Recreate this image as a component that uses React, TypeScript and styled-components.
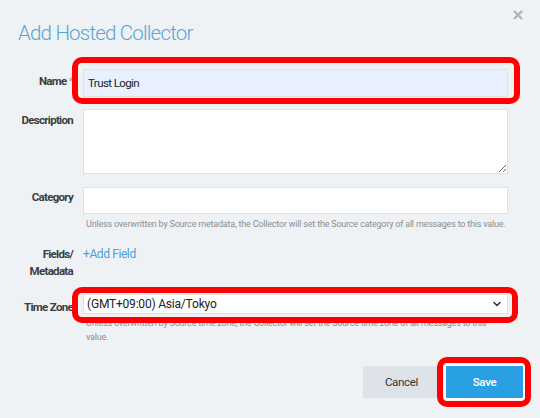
import styled, { createGlobalStyle } from "styled-components";
import { ChevronDown } from "lucide-react";

const GlobalStyle = createGlobalStyle`
  html, body {
    margin: 0;
    padding: 0;
    background: #eff2f4;
  }
  body {
    font-family: Roboto, "Liberation Sans", Arial, sans-serif;
  }
`;

type Inset = { t: number; r: number; b: number; l: number };

const App = () => {
  return (
    <Page>
      <GlobalStyle />
      <Header>
        <Title>Add Hosted Collector</Title>
        <CloseButton aria-label="close">
          <svg width="10" height="10" viewBox="0 0 10 10">
            <path d="M1 1 L9 9 M9 1 L1 9" stroke="#afb3b7" strokeWidth="2.2" />
          </svg>
        </CloseButton>
      </Header>

      <Row $top={23}>
        <Label $pad={5}>
          Name <Star>*</Star>
        </Label>
        <Marked $inset={{ t: 12, r: 12, b: 7, l: 11 }}>
          <TextInput defaultValue="Trust Login" $height={28} $autofill />
        </Marked>
      </Row>

      <Row $top={12}>
        <Label $pad={4}>Description</Label>
        <TextArea />
      </Row>

      <Row $top={13}>
        <Label $pad={3}>Category</Label>
        <Field>
          <TextInput $height={27} />
          <Help>
            Unless overwritten by Source metadata, the Collector will set the
            Source category of all messages to this value.
          </Help>
        </Field>
      </Row>

      <Row $top={16}>
        <Label $pad={0} $lh={17}>
          Fields/
          <br />
          Metadata
        </Label>
        <AddLink>+Add Field</AddLink>
      </Row>

      <Row $top={14}>
        <Label $pad={6}>Time Zone</Label>
        <Field>
          <Marked $inset={{ t: 7, r: 10, b: 9, l: 11 }}>
            <SelectBox>
              <Select defaultValue="tokyo">
                <option value="tokyo">(GMT+09:00) Asia/Tokyo</option>
              </Select>
              <Chevron>
                <ChevronDown size={12} strokeWidth={3} color="#333" />
              </Chevron>
            </SelectBox>
          </Marked>
          <Help $lh={14} $top={2} $width={405}>
            Unless overwritten by Source time zone, the Collector will set the
            Source time zone of all messages to this value.
          </Help>
        </Field>
      </Row>

      <Footer>
        <Button>Cancel</Button>
        <Marked $inset={{ t: 9, r: 8, b: 9, l: 9 }}>
          <Button $primary>Save</Button>
        </Marked>
      </Footer>
    </Page>
  );
};

export default App;

const Page = styled.div`
  width: 540px;
  height: 418px;
  box-sizing: border-box;
  overflow: hidden;
  padding-right: 17px;
  background: #eff2f4;
`;

const Header = styled.div`
  display: flex;
  justify-content: space-between;
  align-items: flex-start;
`;

const Title = styled.h1`
  margin: 0;
  padding: 20px 0 0 18px;
  font-size: 20.5px;
  line-height: 26px;
  font-weight: 300;
  letter-spacing: -0.8px;
  color: #5aa3d6;
`;

const CloseButton = styled.button`
  margin: 10px 0 0 0;
  padding: 0;
  border: 0;
  background: none;
  display: flex;
  cursor: pointer;
`;

const Row = styled.div<{ $top: number }>`
  display: grid;
  grid-template-columns: 73px 425px;
  column-gap: 10px;
  align-items: start;
  margin-top: ${(p) => p.$top}px;
`;

const Label = styled.div<{ $pad: number; $lh?: number }>`
  padding-top: ${(p) => p.$pad}px;
  text-align: right;
  font-size: 11.5px;
  line-height: ${(p) => p.$lh ?? 14}px;
  font-weight: 700;
  letter-spacing: -0.7px;
  color: #3a3d40;
  white-space: nowrap;
`;

const Star = styled.span`
  font-weight: 400;
  color: #9aa0a6;
`;

const Field = styled.div`
  display: flex;
  flex-direction: column;
`;

const Marked = styled.div<{ $inset: Inset }>`
  position: relative;

  &::after {
    content: "";
    position: absolute;
    top: ${(p) => -p.$inset.t}px;
    right: ${(p) => -p.$inset.r}px;
    bottom: ${(p) => -p.$inset.b}px;
    left: ${(p) => -p.$inset.l}px;
    border: 6px solid #ff0000;
    border-radius: 10px;
    pointer-events: none;
    z-index: 2;
  }
`;

const TextInput = styled.input<{ $height: number; $autofill?: boolean }>`
  display: block;
  width: 100%;
  height: ${(p) => p.$height}px;
  box-sizing: border-box;
  padding: 0 4px;
  border: 1px solid #dde2e7;
  background: ${(p) => (p.$autofill ? "#e8f0fe" : "#ffffff")};
  font-family: Roboto, "Liberation Sans", Arial, sans-serif;
  font-size: 11.5px;
  letter-spacing: -0.6px;
  color: #222;
  outline: none;
`;

const TextArea = styled.textarea`
  display: block;
  width: 100%;
  height: 65px;
  box-sizing: border-box;
  margin: 0;
  padding: 4px;
  border: 1px solid #dde2e7;
  background: #ffffff;
  resize: vertical;
  outline: none;
`;

const Help = styled.div<{ $lh?: number; $top?: number; $width?: number }>`
  margin-top: ${(p) => p.$top ?? 4}px;
  padding-left: 3px;
  max-width: ${(p) => p.$width ?? 425}px;
  font-size: 9px;
  line-height: ${(p) => p.$lh ?? 12}px;
  letter-spacing: -0.2px;
  color: #8a8f94;
  white-space: normal;
`;

const AddLink = styled.a`
  font-size: 12px;
  line-height: 17px;
  letter-spacing: -0.4px;
  color: #4aa0dc;
  cursor: pointer;
`;

const SelectBox = styled.div`
  position: relative;
`;

const Select = styled.select`
  display: block;
  width: 100%;
  height: 20px;
  box-sizing: border-box;
  padding: 0 3px;
  border: 1px solid #dde2e7;
  border-radius: 0;
  background: #ffffff;
  appearance: none;
  font-family: Roboto, "Liberation Sans", Arial, sans-serif;
  font-size: 12px;
  letter-spacing: -0.2px;
  color: #222;
  outline: none;
`;

const Chevron = styled.span`
  position: absolute;
  right: 5px;
  top: 4px;
  display: flex;
  pointer-events: none;
`;

const Footer = styled.div`
  display: flex;
  justify-content: flex-end;
  gap: 6px;
  margin-top: 22px;
`;

const Button = styled.button<{ $primary?: boolean }>`
  width: 77px;
  height: 32px;
  border: 0;
  border-radius: 1px;
  background: ${(p) => (p.$primary ? "#29a0e4" : "#dde2e8")};
  color: ${(p) => (p.$primary ? "#ffffff" : "#333")};
  box-shadow: ${(p) => (p.$primary ? "0 0 0 2px #ffffff" : "none")};
  font-family: Roboto, "Liberation Sans", Arial, sans-serif;
  font-size: 11.5px;
  letter-spacing: -0.3px;
  font-weight: ${(p) => (p.$primary ? 500 : 400)};
  cursor: pointer;
`;
